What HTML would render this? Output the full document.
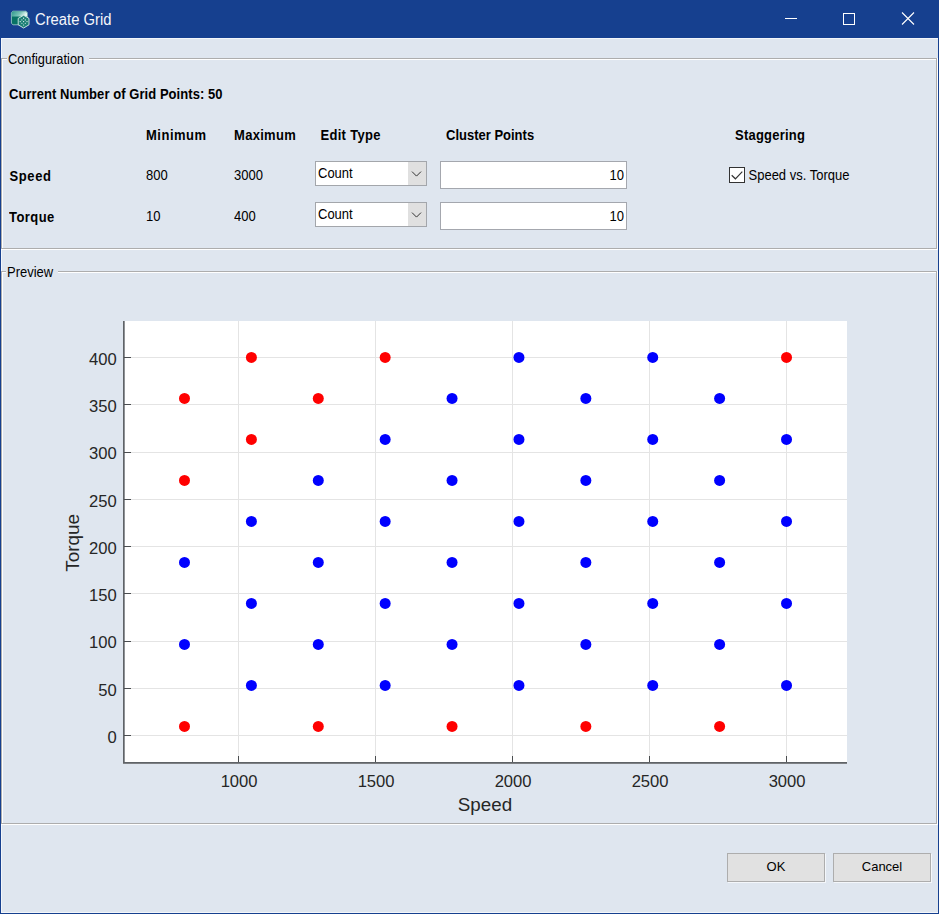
<!DOCTYPE html>
<html><head><meta charset="utf-8"><style>
*{margin:0;padding:0;box-sizing:border-box}
html,body{width:939px;height:914px;overflow:hidden;background:#dfe6ef;font-family:"Liberation Sans",sans-serif;}
.abs{position:absolute;white-space:nowrap}
.ln{position:absolute}
.title{position:absolute;left:0;top:0;width:939px;height:38px;background:#16408f}
.t13{font-size:13px;color:#000;line-height:15px;transform:scaleY(1.1);transform-origin:0 11.8px}
.b13{font-size:13px;font-weight:bold;color:#000;line-height:15px;transform:scaleY(1.1);transform-origin:0 11.8px}
.combo{position:absolute;width:112px;height:25px;border:1px solid #a3a6ab;background:#fff}
.combo .arr{position:absolute;right:0;top:0;width:18px;height:23px;background:#e0e0e0}
.combo .arr svg{position:absolute;left:0;top:0}
.combo span{position:absolute;left:2px;top:4px;font-size:13px;line-height:15px;transform:scaleY(1.1);transform-origin:0 11.8px}
.edit{position:absolute;width:187px;height:28px;border:1px solid #a4a7ae;background:#fff}
.edit span{position:absolute;right:2px;top:6px;font-size:13px;line-height:15px;transform:scaleY(1.1);transform-origin:0 11.8px}
.btn{position:absolute;width:98px;height:29px;background:#e1e1e1;border:1px solid #adadad;box-shadow:1px 1px 0 #f4f7fb;font-size:13px;text-align:center;line-height:26px}
.chart{position:absolute;left:0;top:0}
</style></head><body>
<div class="title"></div>
<svg class="abs" style="left:10px;top:10px" width="20" height="20" viewBox="0 0 20 20">
<defs><linearGradient id="g1" x1="0" y1="0" x2="1" y2="0.3"><stop offset="0" stop-color="#2f9a8c"/><stop offset="0.6" stop-color="#7cc4b8"/><stop offset="1" stop-color="#e4f6f1"/></linearGradient></defs>
<path d="M2.8 1.2 H16 L17.3 2.5 V13.5 L15.5 14.8 H3 L1.4 13.3 V2.8 Z" fill="#087265" stroke="#bfe3db" stroke-width="0.7"/>
<path d="M2.6 1.6 H16 L17 2.6 V6.5 H1.8 V2.8 Z" fill="url(#g1)"/>
<path d="M13.6 5.3 L19 8.4 V14.8 L13.6 18 L8.2 14.8 V8.4 Z" fill="#1d8076" stroke="#d9efe9" stroke-width="0.9"/>
<g fill="#f4fbf9">
<circle cx="13.6" cy="8.2" r="0.6"/><circle cx="13.6" cy="15" r="0.6"/><circle cx="10.2" cy="11.6" r="0.6"/><circle cx="17" cy="11.6" r="0.6"/>
<circle cx="11.9" cy="9.9" r="0.55"/><circle cx="15.3" cy="9.9" r="0.55"/><circle cx="11.9" cy="13.3" r="0.55"/><circle cx="15.3" cy="13.3" r="0.55"/>
<circle cx="13.6" cy="11.6" r="0.6"/>
</g>
</svg>
<div class="abs" style="left:35px;top:11px;font-size:14.8px;color:#f4f6fb;line-height:18px;transform:scaleY(1.07);transform-origin:0 14px">Create Grid</div>
<svg class="abs" style="left:780px;top:8px" width="140" height="22" viewBox="0 0 140 22">
<rect x="5" y="10" width="12" height="1" fill="#fff"/>
<rect x="63.5" y="5.5" width="11" height="11" fill="none" stroke="#fff" stroke-width="1"/>
<path d="M122 4.5 L134 16.5 M134 4.5 L122 16.5" stroke="#fff" stroke-width="1.1"/>
</svg>
<div class="ln" style="left:0;top:38px;width:1px;height:876px;background:#16408f"></div>
<div class="ln" style="left:938px;top:38px;width:1px;height:876px;background:#16408f"></div>
<div class="ln" style="left:0;top:913px;width:939px;height:1px;background:#16408f"></div>
<div class="ln" style="left:1px;top:38px;width:937px;height:1px;background:#f3f6fa"></div>
<div class="ln" style="left:1px;top:38px;width:1px;height:875px;background:#f3f6fa"></div>
<div class="ln" style="left:1px;top:912px;width:937px;height:1px;background:#f3f6fa"></div>

<!-- Configuration panel -->
<div class="ln" style="left:2px;top:59px;width:1px;height:189px;background:#ffffff"></div><div class="ln" style="left:2px;top:59px;width:934px;height:1px;background:#ffffff"></div><div class="ln" style="left:1px;top:249px;width:937px;height:1px;background:#ffffff"></div><div class="ln" style="left:937px;top:58px;width:1px;height:192px;background:#ffffff"></div><div class="ln" style="left:1px;top:58px;width:936px;height:191px;border:1px solid #adadad"></div>
<div class="abs t13" style="left:7px;top:52px;padding:0 5px 0 1px;background:#dfe6ef;font-size:12.8px">Configuration</div>
<div class="abs b13" style="left:9px;top:87px;letter-spacing:0.06px">Current Number of Grid Points: 50</div>
<div class="abs b13" style="left:146px;top:128px;letter-spacing:0.5px">Minimum</div>
<div class="abs b13" style="left:234px;top:128px;letter-spacing:0.3px">Maximum</div>
<div class="abs b13" style="left:320.5px;top:128px;letter-spacing:0.3px">Edit Type</div>
<div class="abs b13" style="left:446px;top:128px">Cluster Points</div>
<div class="abs b13" style="left:735px;top:128px;letter-spacing:0.22px">Staggering</div>
<div class="abs b13" style="left:9.5px;top:169px;letter-spacing:0.6px">Speed</div>
<div class="abs b13" style="left:9px;top:210px;letter-spacing:0.45px">Torque</div>
<div class="abs t13" style="left:146px;top:168px">800</div>
<div class="abs t13" style="left:234px;top:168px">3000</div>
<div class="abs t13" style="left:146px;top:209px">10</div>
<div class="abs t13" style="left:234px;top:209px">400</div>
<div class="combo" style="left:315px;top:161px"><span>Count</span><div class="arr"><svg width="17" height="23" viewBox="0 0 17 23"><path d="M4 9.6 L8.5 14.1 L13 9.6" fill="none" stroke="#333" stroke-width="1"/></svg></div></div>
<div class="combo" style="left:315px;top:202px"><span>Count</span><div class="arr"><svg width="17" height="23" viewBox="0 0 17 23"><path d="M4 9.6 L8.5 14.1 L13 9.6" fill="none" stroke="#333" stroke-width="1"/></svg></div></div>
<div class="edit" style="left:440px;top:161px"><span>10</span></div>
<div class="edit" style="left:440px;top:202px"><span>10</span></div>
<div class="abs" style="left:729px;top:167px;width:16px;height:16px;border:1px solid #333;background:#fff"></div>
<svg class="abs" style="left:729px;top:167px" width="16" height="16" viewBox="0 0 16 16"><path d="M2.7 8.3 L6.4 11.8 L13.3 4.7" fill="none" stroke="#333" stroke-width="1.2"/></svg>
<div class="abs t13" style="left:748.5px;top:168px">Speed vs. Torque</div>

<!-- Preview panel -->
<div class="ln" style="left:2px;top:272px;width:1px;height:551px;background:#ffffff"></div><div class="ln" style="left:2px;top:272px;width:934px;height:1px;background:#ffffff"></div><div class="ln" style="left:1px;top:824px;width:937px;height:1px;background:#ffffff"></div><div class="ln" style="left:937px;top:271px;width:1px;height:554px;background:#ffffff"></div><div class="ln" style="left:1px;top:271px;width:936px;height:553px;border:1px solid #adadad"></div>
<div class="abs t13" style="left:6px;top:265px;padding:0 5px 0 1px;background:#dfe6ef">Preview</div>
<svg class="chart" width="939" height="914" viewBox="0 0 939 914">
<rect x="124" y="321" width="723" height="441" fill="#fff"/>
<rect x="238" y="321" width="1" height="441" fill="#e4e4e4"/>
<rect x="375" y="321" width="1" height="441" fill="#e4e4e4"/>
<rect x="512" y="321" width="1" height="441" fill="#e4e4e4"/>
<rect x="649" y="321" width="1" height="441" fill="#e4e4e4"/>
<rect x="786" y="321" width="1" height="441" fill="#e4e4e4"/>
<rect x="124" y="735" width="723" height="1" fill="#e4e4e4"/>
<rect x="124" y="688" width="723" height="1" fill="#e4e4e4"/>
<rect x="124" y="641" width="723" height="1" fill="#e4e4e4"/>
<rect x="124" y="593" width="723" height="1" fill="#e4e4e4"/>
<rect x="124" y="546" width="723" height="1" fill="#e4e4e4"/>
<rect x="124" y="499" width="723" height="1" fill="#e4e4e4"/>
<rect x="124" y="452" width="723" height="1" fill="#e4e4e4"/>
<rect x="124" y="404" width="723" height="1" fill="#e4e4e4"/>
<rect x="124" y="357" width="723" height="1" fill="#e4e4e4"/>
<g font-family="Liberation Sans" font-size="16.6" fill="#262626">
<text x="239.10" y="787" text-anchor="middle">1000</text>
<text x="376.10" y="787" text-anchor="middle">1500</text>
<text x="513.10" y="787" text-anchor="middle">2000</text>
<text x="650.10" y="787" text-anchor="middle">2500</text>
<text x="787.10" y="787" text-anchor="middle">3000</text>
<text x="116.8" y="742.80" text-anchor="end">0</text>
<text x="116.8" y="695.55" text-anchor="end">50</text>
<text x="116.8" y="648.30" text-anchor="end">100</text>
<text x="116.8" y="601.05" text-anchor="end">150</text>
<text x="116.8" y="553.80" text-anchor="end">200</text>
<text x="116.8" y="506.55" text-anchor="end">250</text>
<text x="116.8" y="459.30" text-anchor="end">300</text>
<text x="116.8" y="412.05" text-anchor="end">350</text>
<text x="116.8" y="364.80" text-anchor="end">400</text>
<text x="485" y="810.6" text-anchor="middle" font-size="18.8">Speed</text>
<text transform="translate(79,542.8) rotate(-90)" text-anchor="middle" font-size="18.9">Torque</text>
</g>
<rect x="123" y="321" width="1" height="442" fill="#5f6367"/>
<rect x="124" y="321" width="1" height="441" fill="#8f9296"/>
<rect x="123" y="762" width="724" height="1" fill="#5f6367"/>
<rect x="123" y="763" width="724" height="1" fill="#7d8084"/>
<g fill="#4a4d50"><rect x="238" y="756" width="1" height="6"/><rect x="375" y="756" width="1" height="6"/><rect x="512" y="756" width="1" height="6"/><rect x="649" y="756" width="1" height="6"/><rect x="786" y="756" width="1" height="6"/><rect x="124" y="735" width="7" height="1"/><rect x="124" y="688" width="7" height="1"/><rect x="124" y="641" width="7" height="1"/><rect x="124" y="593" width="7" height="1"/><rect x="124" y="546" width="7" height="1"/><rect x="124" y="499" width="7" height="1"/><rect x="124" y="452" width="7" height="1"/><rect x="124" y="404" width="7" height="1"/><rect x="124" y="357" width="7" height="1"/></g>
<circle cx="184.50" cy="726.40" r="5.5" fill="#ff0000"/>
<circle cx="184.50" cy="644.40" r="5.5" fill="#0000ff"/>
<circle cx="184.50" cy="562.40" r="5.5" fill="#0000ff"/>
<circle cx="184.50" cy="480.40" r="5.5" fill="#ff0000"/>
<circle cx="184.50" cy="398.40" r="5.5" fill="#ff0000"/>
<circle cx="251.39" cy="685.40" r="5.5" fill="#0000ff"/>
<circle cx="251.39" cy="603.40" r="5.5" fill="#0000ff"/>
<circle cx="251.39" cy="521.40" r="5.5" fill="#0000ff"/>
<circle cx="251.39" cy="439.40" r="5.5" fill="#ff0000"/>
<circle cx="251.39" cy="357.40" r="5.5" fill="#ff0000"/>
<circle cx="318.28" cy="726.40" r="5.5" fill="#ff0000"/>
<circle cx="318.28" cy="644.40" r="5.5" fill="#0000ff"/>
<circle cx="318.28" cy="562.40" r="5.5" fill="#0000ff"/>
<circle cx="318.28" cy="480.40" r="5.5" fill="#0000ff"/>
<circle cx="318.28" cy="398.40" r="5.5" fill="#ff0000"/>
<circle cx="385.17" cy="685.40" r="5.5" fill="#0000ff"/>
<circle cx="385.17" cy="603.40" r="5.5" fill="#0000ff"/>
<circle cx="385.17" cy="521.40" r="5.5" fill="#0000ff"/>
<circle cx="385.17" cy="439.40" r="5.5" fill="#0000ff"/>
<circle cx="385.17" cy="357.40" r="5.5" fill="#ff0000"/>
<circle cx="452.06" cy="726.40" r="5.5" fill="#ff0000"/>
<circle cx="452.06" cy="644.40" r="5.5" fill="#0000ff"/>
<circle cx="452.06" cy="562.40" r="5.5" fill="#0000ff"/>
<circle cx="452.06" cy="480.40" r="5.5" fill="#0000ff"/>
<circle cx="452.06" cy="398.40" r="5.5" fill="#0000ff"/>
<circle cx="518.95" cy="685.40" r="5.5" fill="#0000ff"/>
<circle cx="518.95" cy="603.40" r="5.5" fill="#0000ff"/>
<circle cx="518.95" cy="521.40" r="5.5" fill="#0000ff"/>
<circle cx="518.95" cy="439.40" r="5.5" fill="#0000ff"/>
<circle cx="518.95" cy="357.40" r="5.5" fill="#0000ff"/>
<circle cx="585.84" cy="726.40" r="5.5" fill="#ff0000"/>
<circle cx="585.84" cy="644.40" r="5.5" fill="#0000ff"/>
<circle cx="585.84" cy="562.40" r="5.5" fill="#0000ff"/>
<circle cx="585.84" cy="480.40" r="5.5" fill="#0000ff"/>
<circle cx="585.84" cy="398.40" r="5.5" fill="#0000ff"/>
<circle cx="652.73" cy="685.40" r="5.5" fill="#0000ff"/>
<circle cx="652.73" cy="603.40" r="5.5" fill="#0000ff"/>
<circle cx="652.73" cy="521.40" r="5.5" fill="#0000ff"/>
<circle cx="652.73" cy="439.40" r="5.5" fill="#0000ff"/>
<circle cx="652.73" cy="357.40" r="5.5" fill="#0000ff"/>
<circle cx="719.62" cy="726.40" r="5.5" fill="#ff0000"/>
<circle cx="719.62" cy="644.40" r="5.5" fill="#0000ff"/>
<circle cx="719.62" cy="562.40" r="5.5" fill="#0000ff"/>
<circle cx="719.62" cy="480.40" r="5.5" fill="#0000ff"/>
<circle cx="719.62" cy="398.40" r="5.5" fill="#0000ff"/>
<circle cx="786.51" cy="685.40" r="5.5" fill="#0000ff"/>
<circle cx="786.51" cy="603.40" r="5.5" fill="#0000ff"/>
<circle cx="786.51" cy="521.40" r="5.5" fill="#0000ff"/>
<circle cx="786.51" cy="439.40" r="5.5" fill="#0000ff"/>
<circle cx="786.51" cy="357.40" r="5.5" fill="#ff0000"/>
</svg>
<div class="btn" style="left:727px;top:853px">OK</div>
<div class="btn" style="left:833px;top:853px">Cancel</div>
</body></html>
